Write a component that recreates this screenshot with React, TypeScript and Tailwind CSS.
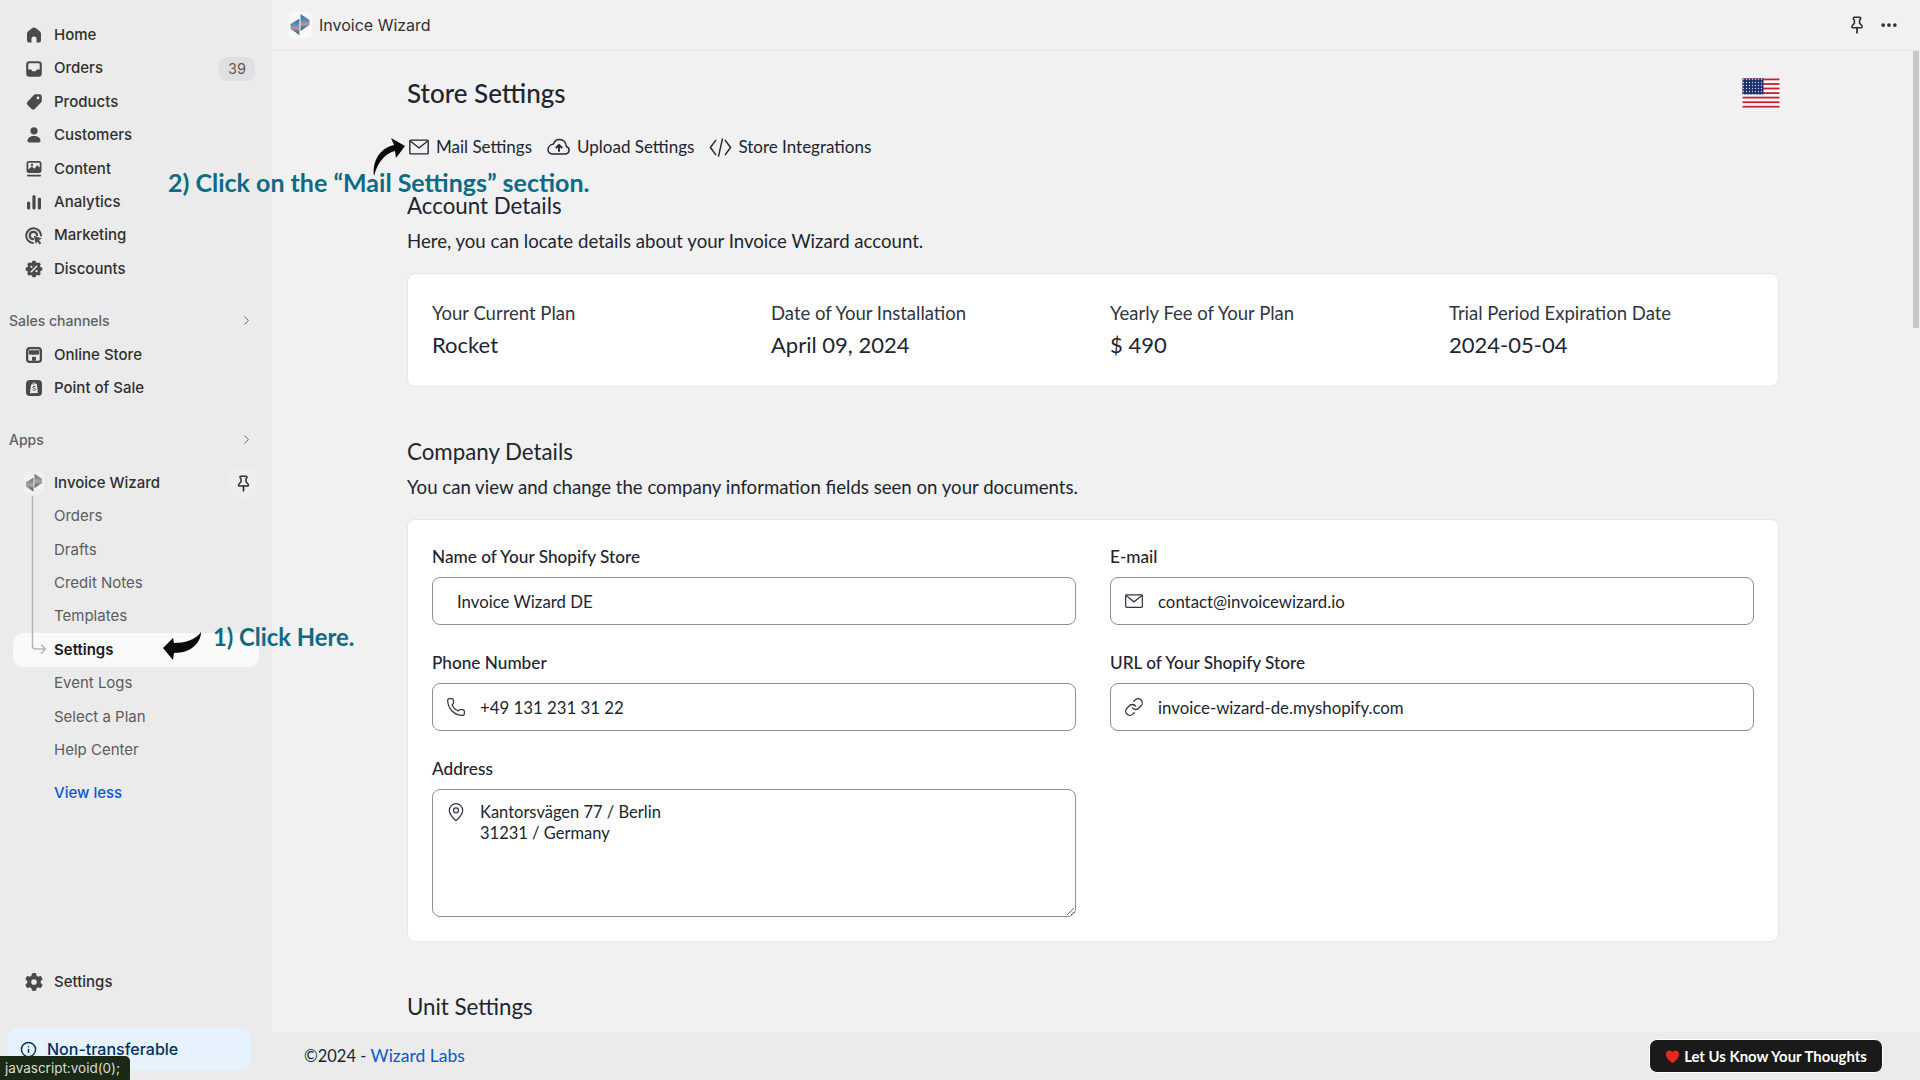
import React from "react";
import { Phone, Link, MapPin, Ellipsis, ChevronRight, Info } from "lucide-react";
import { FaGear } from "react-icons/fa6";

const ic = "w-[20px] h-[20px] shrink-0 text-[#4a4a4a]";

const HomeIcon = () => (
  <svg viewBox="0 0 20 20" className={ic} fill="currentColor">
    <path d="M8.300 3c1-.8 2.400-.8 3.400 0l4 3.200c.8.600 1.300 1.600 1.300 2.600V15.500c0 1.100-.9 2-2 2h-2.500V13.500c0-1.100-.9-2-2.500-2s-2.500.9-2.500 2V17.500H5c-1.100 0-2-.9-2-2V8.800c0-1 .5-2 1.300-2.600z" />
  </svg>
);
const OrdersIcon = () => (
  <svg viewBox="0 0 20 20" className={ic} fill="currentColor">
    <path fillRule="evenodd" d="M5.500 2.200h9a3.300 3.300 0 0 1 3.300 3.300v9a3.300 3.300 0 0 1-3.300 3.300h-9a3.300 3.300 0 0 1-3.300-3.300v-9a3.300 3.300 0 0 1 3.300-3.300zM4.300 10.500v-5a1.200 1.200 0 0 1 1.200-1.200h9a1.200 1.200 0 0 1 1.200 1.200v5h-3l-1 1.700H8.300l-1-1.700z" />
  </svg>
);
const TagIcon = () => (
  <svg viewBox="0 0 20 20" className={ic} fill="currentColor">
    <path fillRule="evenodd" d="M11.500 2.200h4a2.300 2.300 0 0 1 2.300 2.300v4.500c0 .6-.2 1.200-.7 1.600l-6.400 6.400a2.200 2.200 0 0 1-3.100 0l-4.100-4.100a2.200 2.200 0 0 1 0-3.100l6.400-6.900c.4-.5 1-.7 1.600-.7zM14 7.400a1.400 1.400 0 1 0 0-2.800 1.400 1.400 0 0 0 0 2.800z" />
  </svg>
);
const PersonIcon = () => (
  <svg viewBox="0 0 20 20" className={ic} fill="currentColor">
    <circle cx="10" cy="5.800" r="3.600" />
    <path d="M3.500 15.800c0-2.900 2.800-4.800 6.500-4.800s6.500 1.900 6.500 4.800c0 1-.8 1.700-1.700 1.700H5.200c-.9 0-1.700-.7-1.700-1.700z" />
  </svg>
);
const ContentIcon = () => (
  <svg viewBox="0 0 20 20" className={ic} fill="currentColor">
    <path fillRule="evenodd" d="M5 2h10a2.500 2.500 0 0 1 2.500 2.500v7A2.500 2.500 0 0 1 15 14H5a2.500 2.500 0 0 1-2.500-2.500v-7A2.500 2.500 0 0 1 5 2zM4.300 3.800v6.700l3.500-3 2.700 2.200 2.700-3.500 2.500 2.500V3.800z" />
    <circle cx="8" cy="6" r="1.200" />
    <rect x="3" y="15.800" width="14" height="1.700" rx=".8" />
  </svg>
);
const BarsIcon = () => (
  <svg viewBox="0 0 20 20" className={ic} fill="currentColor">
    <rect x="3" y="9.500" width="3.200" height="8" rx="1.600" />
    <rect x="8.400" y="3" width="3.200" height="14.500" rx="1.600" />
    <rect x="13.800" y="5.500" width="3.200" height="12" rx="1.600" />
  </svg>
);
const MarketingIcon = () => (
  <svg viewBox="0 0 20 20" className={ic} fill="none" stroke="currentColor">
    <path d="M8.800 17A7.400 7.400 0 1 1 17 9.500" strokeWidth="2.100" strokeLinecap="round" />
    <path d="M9 13.100a3.600 3.600 0 1 1 4-3.800" strokeWidth="2.100" strokeLinecap="round" />
    <path d="M9.800 9.800l8.200 2.800-3.200 1.500 2.400 3-1.600 1.300-2.300-3-1.500 2.800z" fill="currentColor" stroke="none" />
  </svg>
);
const DiscountIcon = () => (
  <svg viewBox="0 0 20 20" className={ic}>
    <g fill="currentColor">
      <circle cx="10" cy="10" r="6.800" />
      <circle cx="10" cy="3.600" r="2.100" /><circle cx="10" cy="16.400" r="2.100" />
      <circle cx="3.600" cy="10" r="2.100" /><circle cx="16.400" cy="10" r="2.100" />
      <circle cx="5.500" cy="5.500" r="2.100" /><circle cx="14.500" cy="5.500" r="2.100" />
      <circle cx="5.500" cy="14.500" r="2.100" /><circle cx="14.500" cy="14.500" r="2.100" />
    </g>
    <path d="M7.300 12.700l5.400-5.400" stroke="#ebebeb" strokeWidth="1.500" strokeLinecap="round" />
    <circle cx="7.500" cy="7.800" r="1.100" fill="#ebebeb" />
    <circle cx="12.500" cy="12.200" r="1.100" fill="#ebebeb" />
  </svg>
);
const StoreIcon = () => (
  <svg viewBox="0 0 20 20" className={ic}>
    <rect x="2" y="2" width="16" height="16" rx="3.800" fill="currentColor" />
    <rect x="4.300" y="4.300" width="11.400" height="11.400" rx="1.500" fill="#ebebeb" />
    <path d="M4.800 5.200h10.400v3.300a1.500 1.500 0 0 1-2.600.8 1.700 1.700 0 0 1-2.600 0 1.700 1.700 0 0 1-2.600 0 1.500 1.500 0 0 1-2.600-.8z" fill="currentColor" />
    <path d="M8 15.700v-3.200c0-.4.300-.7.700-.7h2.600c.4 0 .7.300.7.700v3.200z" fill="currentColor" />
  </svg>
);
const PosIcon = () => (
  <svg viewBox="0 0 20 20" className={ic}>
    <rect x="2" y="2" width="16" height="16" rx="3.800" fill="currentColor" />
    <path d="M7 6.800l5.800-1 1 9.200-7.800.3z" fill="#ebebeb" />
    <path d="M8.300 7c0-2.500 2.800-2.800 3.400-.6" fill="none" stroke="#ebebeb" strokeWidth="1" />
    <path d="M11.500 8.800c-.5-.7-2.600-.7-2.600.5 0 1.300 2.700.8 2.700 2.100 0 1.200-2.300 1.200-3 .4" stroke="currentColor" strokeWidth="1" fill="none" />
  </svg>
);
const PinIcon = ({ className }: { className: string }) => (
  <svg viewBox="0 0 20 20" className={className} fill="none" stroke="currentColor" strokeWidth="1.600" strokeLinejoin="round" strokeLinecap="round">
    <path d="M7.300 2.300h5.400c.9 0 1.400 1 .8 1.700l-.9 1v3.200l2.300 2.500c.7.700.2 2-.8 2H5.900c-1 0-1.500-1.300-.8-2l2.300-2.500V5l-.9-1c-.6-.7-.1-1.700.8-1.700z" />
    <path d="M10 12.700v5" strokeWidth="1.800" />
  </svg>
);
const MailIcon = ({ className }: { className: string }) => (
  <svg viewBox="0 0 24 24" className={className} fill="none" stroke="currentColor" strokeWidth="1.500" strokeLinejoin="miter">
    <rect x="2" y="4.500" width="20" height="15" rx="1" />
    <path d="M2.500 5.500l9.500 7.500 9.500-7.500" />
  </svg>
);
const CloudIcon = ({ className }: { className: string }) => (
  <svg viewBox="0 0 24 24" className={className} fill="none" stroke="currentColor" strokeWidth="1.500" strokeLinecap="round" strokeLinejoin="round">
    <path d="M6 19h12.500a3.800 3.800 0 0 0 1-7.400C19 7.800 16.500 4.500 12.500 4.500c-3 0-5 1.800-6 4.500C3.500 9.500 1 11.800 1 14.500 1 17 3 19 6 19z" />
    <path d="M12 16V10M9.300 12.500L12 9.800l2.700 2.700" strokeWidth="1.800" />
  </svg>
);
const CodeIcon = ({ className }: { className: string }) => (
  <svg viewBox="0 0 24 24" className={className} fill="none" stroke="currentColor" strokeWidth="1.500" strokeLinecap="round" strokeLinejoin="round">
    <path d="M7 4.500L1.500 12 7 19.500M17 4.500l5.500 7.500-5.500 7.500M14 3l-4 18" />
  </svg>
);
const Logo = ({ mono = false, size = 26, id }: { mono?: boolean; size?: number; id: string }) => (
  <svg viewBox="0 0 24 26" width={size} height={size} className="shrink-0">
    <defs>
      <linearGradient id={id} x1="0" y1="0" x2="0" y2="1">
        {mono ? (
          <>
            <stop offset="0" stopColor="#6f6f6f" />
            <stop offset=".55" stopColor="#a8a8a8" />
            <stop offset="1" stopColor="#4a4a4a" />
          </>
        ) : (
          <>
            <stop offset="0" stopColor="#2f6f92" />
            <stop offset=".4" stopColor="#5f93b3" />
            <stop offset=".6" stopColor="#c98aa3" />
            <stop offset=".78" stopColor="#4d7f9c" />
            <stop offset="1" stopColor="#14566f" />
          </>
        )}
      </linearGradient>
    </defs>
    <rect width="24" height="26" rx="5" fill={mono ? "#f1f1f1" : "#f8f8f8"} />
    <path d="M11.400 6.700V23L2.500 17v-5z" fill={`url(#${id})`} />
    <path d="M12.500 2v17l9-6V8z" fill={`url(#${id})`} />
  </svg>
);

const Item = ({ icon, label, right }: { icon: React.ReactNode; label: string; right?: React.ReactNode }) => (
  <div className="h-[33.4px] flex items-center pl-[24px] gap-[10px] text-[15px] font-medium text-[#303030]">
    {icon}
    <span>{label}</span>
    {right}
  </div>
);
const Section = ({ label }: { label: string }) => (
  <div className="h-[24px] flex items-center justify-between pl-[9px] pr-[18px] text-[14px] font-medium text-[#616161]">
    <span>{label}</span>
    <ChevronRight className="w-[15px] h-[15px]" strokeWidth={1.500} />
  </div>
);
const Sub = ({ label }: { label: string }) => (
  <div className="h-[33.4px] flex items-center pl-[54px] text-[15px] text-[#5c5c5c]">{label}</div>
);

const Sidebar = () => (
  <aside className="w-[272px] shrink-0 h-full bg-[#ebebeb] flex flex-col pt-[18.500px] font-[family-name:Inter,sans-serif]">
    <Item icon={<HomeIcon />} label="Home" />
    <Item
      icon={<OrdersIcon />}
      label="Orders"
      right={
        <span className="ml-auto mr-[17px] w-[36px] h-[24px] rounded-[8px] bg-[#e0e0e0] flex items-center justify-center text-[14.500px] font-normal text-[#5c5c5c]">
          39
        </span>
      }
    />
    <Item icon={<TagIcon />} label="Products" />
    <Item icon={<PersonIcon />} label="Customers" />
    <Item icon={<ContentIcon />} label="Content" />
    <Item icon={<BarsIcon />} label="Analytics" />
    <Item icon={<MarketingIcon />} label="Marketing" />
    <Item icon={<DiscountIcon />} label="Discounts" />

    <div className="mt-[22.500px]"><Section label="Sales channels" /></div>
    <div className="mt-[6px]">
      <Item icon={<StoreIcon />} label="Online Store" />
      <Item icon={<PosIcon />} label="Point of Sale" />
    </div>

    <div className="mt-[23px]"><Section label="Apps" /></div>
    <div className="mt-[14.500px] relative">
      <div className="h-[33.4px] flex items-center pl-[23px] gap-[9px] text-[15px] font-medium text-[#303030]">
        <Logo mono size={22} id="logo-mono" />
        <span>Invoice Wizard</span>
        <span className="ml-auto mr-[15px] w-[27px] h-[29px] rounded-[8px] bg-[#eeeeee] flex items-center justify-center">
          <PinIcon className="w-[19px] h-[19px] text-[#303030]" />
        </span>
      </div>
      <Sub label="Orders" />
      <Sub label="Drafts" />
      <Sub label="Credit Notes" />
      <Sub label="Templates" />
      <div className="ml-[13px] w-[246px] h-[33.4px] rounded-[10px] bg-[#fafafa] flex items-center pl-[41px] text-[15px] font-semibold text-[#1a1a1a]">
        Settings
      </div>
      <Sub label="Event Logs" />
      <Sub label="Select a Plan" />
      <Sub label="Help Center" />
      <svg className="absolute left-[28px] top-[28px]" width="20" height="165" viewBox="0 0 20 165" fill="none" stroke="#b5b5b5" strokeWidth="1.500">
        <path d="M4.500 2v150c0 2 1 3 3 3h9M13 150.500l4.500 4.500-4.500 4.500" />
      </svg>
    </div>
    <div className="mt-[9.500px] h-[33px] flex items-center pl-[54px] text-[15px] font-medium text-[#0b57d0]">View less</div>

    <div className="mt-auto">
      <Item icon={<FaGear className="w-[18px] h-[18px] mx-[1px] shrink-0 text-[#4a4a4a]" />} label="Settings" />
    </div>
    <div className="mt-[29px] mb-[10px] ml-[8px] mr-[21px] h-[42px] rounded-[10px] bg-[#e6f2fe] flex items-center pl-[12px] gap-[10px] text-[16px] font-medium text-[#00305e]">
      <Info className="w-[17px] h-[17px] shrink-0" strokeWidth={2} />
      <span>Non-transferable</span>
    </div>
  </aside>
);

const main = "font-[family-name:Lato,sans-serif]";

const FlagUS = () => (
  <svg viewBox="0 0 38 30" width="38" height="30" className="ml-auto -mr-[1px] shrink-0">
    <defs>
      <pattern id="stars" width="3" height="3" patternUnits="userSpaceOnUse">
        <rect width="3" height="3" fill="#1d2f6b" />
        <circle cx="1.500" cy="1.500" r=".7" fill="#cfd6ea" />
      </pattern>
    </defs>
    <rect width="38" height="30" fill="#f8f8f8" />
    {[1.200, 5.800, 10.300, 14.900, 19.400, 24, 28.500].map((y) => (
      <rect key={y} x="0.500" y={y - 0.7} width="37" height="1.800" fill="#c8202f" />
    ))}
    <rect x="0.500" y="0.500" width="21" height="16" fill="url(#stars)" />
  </svg>
);

const Tab = ({ icon, label }: { icon: React.ReactNode; label: string }) => (
  <div className="flex items-center gap-[6px]">
    {icon}
    <span>{label}</span>
  </div>
);

const Stat = ({ label, value }: { label: string; value: string }) => (
  <div className="flex flex-col">
    <span className="h-[24px] leading-[24px] text-[18.500px] text-[#303641]">{label}</span>
    <span className="mt-[5px] h-[30px] leading-[30px] text-[22px] text-[#202530]">{value}</span>
  </div>
);

const Field = ({ label, children }: { label: string; children: React.ReactNode }) => (
  <div className="flex flex-col gap-[8px]">
    <span className="h-[24px] leading-[24px] text-[17.200px] font-medium text-[#202530]">{label}</span>
    <div className="relative">{children}</div>
  </div>
);
const inputCls =
  "w-full h-[48px] rounded-[8px] border border-[#8a8f98] bg-white text-[16.800px] text-[#202530] outline-none";
const over = "absolute left-[14px] top-[14px] w-[20px] h-[20px] text-[#303641]";

export default function App() {
  return (
    <div className="relative w-[1920px] h-[1080px] overflow-hidden flex bg-[#f1f1f1]">
      <Sidebar />
      <div className="flex-1 h-full flex flex-col min-w-0 relative">
        <header className="h-[51px] shrink-0 border-b border-[#e8e8e8] flex items-center pl-[15px] pr-[21px] font-[family-name:Inter,sans-serif] text-[16px] text-[#303030]">
          <Logo id="logo-color" />
          <span className="ml-[6px]">Invoice Wizard</span>
          <PinIcon className="ml-auto w-[20px] h-[20px] text-[#303030]" />
          <Ellipsis className="ml-[12px] w-[20px] h-[20px] text-[#303030]" strokeWidth={2.500} />
        </header>

        <main className={`flex-1 min-h-0 overflow-hidden pl-[135px] pr-[141px] ${main} text-[#202530]`}>
          <div className="mt-[25px] flex items-center h-[34px]">
            <h1 className="text-[26px] font-medium">Store Settings</h1>
            <FlagUS />
          </div>
          <div className="mt-[25px] h-[24px] flex items-center gap-[15px] text-[17px] pl-[1px]">
            <Tab icon={<MailIcon className="w-[22px] h-[22px]" />} label="Mail Settings" />
            <Tab icon={<CloudIcon className="w-[24px] h-[24px]" />} label="Upload Settings" />
            <Tab icon={<CodeIcon className="w-[23px] h-[23px]" />} label="Store Integrations" />
          </div>

          <h2 className="mt-[32px] h-[30px] leading-[30px] text-[22.300px]">Account Details</h2>
          <p className="mt-[8px] h-[24px] leading-[24px] text-[18.620px]">Here, you can locate details about your Invoice Wizard account.</p>
          <section className="mt-[20px] h-[114px] rounded-[8px] border border-[#e6e6e6] bg-white grid grid-cols-[repeat(4,339px)] pl-[24px] pt-[27px]">
            <Stat label="Your Current Plan" value="Rocket" />
            <Stat label="Date of Your Installation" value="April 09, 2024" />
            <Stat label="Yearly Fee of Your Plan" value="$ 490" />
            <Stat label="Trial Period Expiration Date" value="2024-05-04" />
          </section>

          <h2 className="mt-[50px] h-[30px] leading-[30px] text-[22.300px]">Company Details</h2>
          <p className="mt-[8px] h-[24px] leading-[24px] text-[18.620px]">You can view and change the company information fields seen on your documents.</p>
          <section className="mt-[20px] h-[423px] rounded-[8px] border border-[#e6e6e6] bg-white grid grid-cols-2 content-start gap-x-[34px] gap-y-[26px] px-[24px] pt-[25px]">
            <Field label="Name of Your Shopify Store">
              <input readOnly value="Invoice Wizard DE" className={`${inputCls} pl-[24px]`} />
            </Field>
            <Field label="E-mail">
              <input readOnly value="contact@invoicewizard.io" className={`${inputCls} pl-[47px]`} />
              <MailIcon className={over} />
            </Field>
            <Field label="Phone Number">
              <input readOnly value="+49 131 231 31 22" className={`${inputCls} pl-[47px]`} />
              <Phone className={over} strokeWidth={1.500} />
            </Field>
            <Field label="URL of Your Shopify Store">
              <input readOnly value="invoice-wizard-de.myshopify.com" className={`${inputCls} pl-[47px]`} />
              <Link className={over} strokeWidth={1.600} />
            </Field>
            <Field label="Address">
              <textarea
                readOnly
                value={"Kantorsvägen 77 / Berlin\n31231 / Germany"}
                className="block w-full h-[128px] rounded-[8px] border border-[#8a8f98] bg-white text-[16.500px] leading-[21px] text-[#202530] outline-none pl-[47px] pt-[12px]"
              />
              <MapPin className="absolute left-[14px] top-[13px] w-[20px] h-[20px] text-[#303641]" strokeWidth={1.500} />
            </Field>
          </section>
          <h2 className="mt-[50px] h-[30px] leading-[30px] text-[22.300px]">Unit Settings</h2>
        </main>

        <footer className={`h-[48px] shrink-0 bg-[#ebebeb] flex items-center pl-[32px] pr-[37px] ${main} text-[17.500px] text-[#202530]`}>
          <span>
            <span className="text-[16.500px]">©2024 - </span>
            <span className="text-[#0b57d0]">Wizard Labs</span>
          </span>
          <div className="ml-auto w-[234px] h-[34px] rounded-[8px] bg-[#1a1a1a] border border-white flex items-center justify-center gap-[4px] text-[14.900px] font-bold text-white">
            <svg viewBox="0 0 16 16" width="15" height="15">
              <path d="M8 15S1 10.500 1 5.500C1 3 2.800 1.500 4.600 1.500 6 1.500 7.300 2.300 8 3.500c.7-1.200 2-2 3.400-2C13.200 1.500 15 3 15 5.500 15 10.500 8 15 8 15z" fill="#e8281e" />
            </svg>
            <span>Let Us Know Your Thoughts</span>
          </div>
        </footer>

        <div className="absolute right-[1px] top-[51px] w-[6px] h-[277px] bg-[#c8c8c8]" />
      </div>

      {/* Tutorial annotations lying over the page */}
      <span className={`absolute left-[168px] top-[166px] h-[32px] leading-[32px] text-[25px] font-bold text-[#0f6a85] whitespace-nowrap ${main}`}>
        2) Click on the “Mail Settings” section.
      </span>
      <span className={`absolute left-[213px] top-[622px] h-[30px] leading-[30px] text-[23.800px] font-bold text-[#0f6a85] whitespace-nowrap ${main}`}>
        1) Click Here.
      </span>
      <svg className="absolute left-[370px] top-[135px]" width="40" height="45" viewBox="0 0 40 45" fill="#0a0a0a">
        <path d="M4 41C2 26 10 13 24 10L21 3 35 11 26 23 25 16C16 18 8 26 4 41Z" />
      </svg>
      <svg className="absolute left-[160px] top-[630px]" width="44" height="34" viewBox="0 0 44 34" fill="#0a0a0a">
        <path d="M3 18L13 8 14 13C24 13 36 10 41 2 41 12 32 23 14 23L13 30Z" />
      </svg>
      <div className="absolute left-0 bottom-0 w-[130px] h-[24px] rounded-tr-[5px] bg-[#1b2a17] flex items-center pl-[5px] font-[family-name:Inter,sans-serif] text-[13.500px] text-[#dcdccb] whitespace-nowrap">
        javascript:void(0);
      </div>
    </div>
  );
}
